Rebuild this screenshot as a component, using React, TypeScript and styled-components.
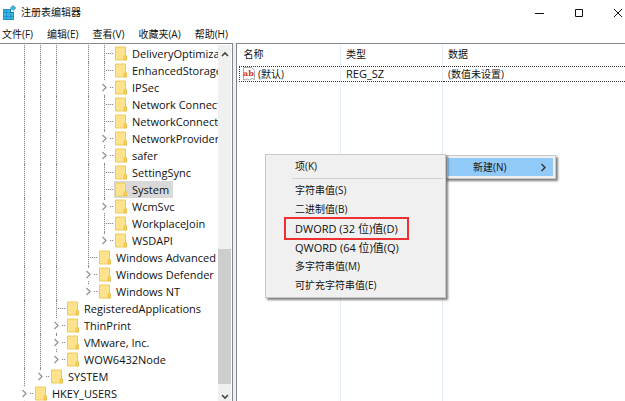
import React from "react";
import styled, { createGlobalStyle } from "styled-components";

const Global = createGlobalStyle`
  * { box-sizing: border-box; }
  html, body, #root { height: 100%; }
  body { margin: 0; overflow: hidden; background: #fff; }
  body, button { font-family: "Open Sans", "Noto Sans CJK SC", sans-serif; font-size: 10px; line-height: 17px; color: #111; }
`;

const Window = styled.div`
  height: 100vh;
  display: flex;
  flex-direction: column;
  background: #fff;
  overflow: hidden;
`;

const TitleBar = styled.header`
  display: flex;
  align-items: center;
  height: 25px;
  padding-left: 2px;
  margin-right: -12px;
  flex: none;
`;

const Title = styled.h1`
  margin: 0 auto 0 5px;
  font-size: 10px;
  font-weight: 400;
`;

const CaptionButton = styled.button`
  display: flex;
  justify-content: center;
  align-items: center;
  width: 39px;
  height: 24px;
  padding: 0;
  border: 0;
  background: none;
`;

const MenuBar = styled.nav`
  display: flex;
  gap: 14px;
  height: 18px;
  padding-left: 2px;
  flex: none;
`;

const MenuBarItem = styled.button`
  padding: 0;
  border: 0;
  background: none;
  white-space: nowrap;
`;

const Panels = styled.main`
  flex: 1;
  min-height: 0;
  display: grid;
  grid-template-columns: minmax(120px, 233px) 1fr;
  column-gap: 3px;
  background: #f0f0f0;
`;

const TreePanel = styled.section`
  display: grid;
  grid-template-columns: 1fr 13px;
  min-height: 0;
  padding: 1px 1px 0 0;
  background: #fff;
  border-top: 1px solid #828790;
  border-right: 1px solid #828790;
  overflow: hidden;
`;

const Tree = styled.ul`
  margin: 0;
  padding: 0 0 0 16px;
  list-style: none;
  overflow: hidden;
`;

const TreeRow = styled.li`
  display: flex;
  height: 17px;
  white-space: nowrap;
  &:nth-child(even) { --phase: 1px; }
`;

type Span = "full" | "above" | "none";
const Guide = styled.span<{ $span: Span }>`
  position: relative;
  flex: none;
  width: 16px;
  height: 17px;
  display: flex;
  justify-content: center;
  align-items: center;
  &::before {
    content: "";
    position: absolute;
    inset: 0 auto ${(p) => (p.$span === "above" ? "8px" : "0")} 8px;
    width: 1px;
    display: ${(p) => (p.$span === "none" ? "none" : "block")};
    background: repeating-linear-gradient(#8c8c8c 0 1px, #e4e4e4 1px 2px) 0 var(--phase, 0);
  }
  svg { position: relative; background: #fff; }
`;

const Stub = styled.span<{ $long: boolean }>`
  flex: none;
  align-self: center;
  width: ${(p) => (p.$long ? 10 : 4)}px;
  height: 1px;
  margin-left: ${(p) => (p.$long ? -8 : -2)}px;
  background: repeating-linear-gradient(90deg, #8c8c8c 0 1px, #e4e4e4 1px 2px);
`;

const TreeLabel = styled.button<{ $selected: boolean }>`
  display: flex;
  align-items: center;
  gap: 5px;
  height: 17px;
  padding: 0 4px 0 1px;
  border: 0;
  font-size: 11px;
  white-space: nowrap;
  background: ${(p) => (p.$selected ? "#d9d9d9" : "none")};
`;

const Scrollbar = styled.div`
  display: flex;
  flex-direction: column;
  background: #f0f0f0;
`;

const ScrollButton = styled.button<{ $bottom?: boolean }>`
  height: 17px;
  flex: none;
  padding: 0;
  padding-top: ${(p) => (p.$bottom ? 8 : 0)}px;
  border: 0;
  background: none;
  display: flex;
  align-items: center;
  justify-content: center;
`;

const ScrollTrack = styled.div`
  flex: 1;
  display: flex;
  flex-direction: column;
  justify-content: flex-end;
`;

const ScrollThumb = styled.div`
  height: 42%;
  background: #cdcdcd;
`;

const ListPanel = styled.section`
  position: relative;
  min-width: 0;
  padding-left: 2px;
  background: #fff;
  border-top: 1px solid #828790;
  border-left: 1px solid #828790;
`;

const ValueTable = styled.table`
  width: 100%;
  height: 100%;
  table-layout: fixed;
  border-collapse: collapse;
  th, td { padding: 0 0 0 4px; text-align: left; font-weight: 400; white-space: nowrap; }
  th + th, td + td { border-left: 1px solid #e3effb; padding-left: 5px; }
`;

const HeadRow = styled.tr`
  height: 22px;
`;

const ValueRow = styled.tr`
  height: 15px;
  td {
    line-height: 14px;
    border-top: 1px dotted #333;
    border-bottom: 1px dotted #333;
  }
  td:first-child { padding-left: 2px; border-left: 1px dotted #333; }
`;

const TypeText = styled.span`
  font-size: 11px;
`;

const Name = styled.span`
  display: flex;
  align-items: center;
  gap: 2px;
`;

const Popup = styled.div`
  position: absolute;
  background: #f0f0f0;
  border: 1px solid #c8c8c8;
  box-shadow: 2px 2px 2px rgba(0, 0, 0, 0.5);
`;

const ParentMenu = styled(Popup)`
  left: 208px;
  top: 111px;
  width: 111px;
  padding: 2px;
`;

const ParentItem = styled.button`
  display: flex;
  align-items: center;
  justify-content: space-between;
  width: 100%;
  height: 18px;
  padding: 0 6px 0 25px;
  border: 0;
  background: #91c9f7;
`;

const SubMenu = styled(Popup)`
  left: 28px;
  top: 110px;
  width: 181px;
  padding: 2px;
`;

const SubItem = styled.button<{ $marked?: boolean; $latin?: boolean }>`
  display: block;
  width: 100%;
  height: 19px;
  padding: 0 0 0 27px;
  border: 0;
  background: none;
  font-size: ${(p) => (p.$latin ? 11 : 10)}px;
  text-align: left;
  white-space: nowrap;
  position: relative;
  &::after {
    content: "";
    display: ${(p) => (p.$marked ? "block" : "none")};
    position: absolute;
    inset: -2px 34px -2px 16px;
    border: 2px solid #ee3033;
  }
`;

const Separator = styled.hr`
  margin: 2px 0 2px 24px;
  border: 0;
  border-top: 1px solid #d0d0d0;
`;

const Chevron = ({ color = "#999" }: { color?: string }) => (
  <svg width="8" height="13" viewBox="0 0 8 13" fill="none" stroke={color} strokeWidth="1.4">
    <path d="M2.5 3 6 6.5 2.5 10" />
  </svg>
);

const Folder = () => (
  <svg width="12" height="15" viewBox="0 0 12 15">
    <path d="M.5 1h10v8.5l1 .5v4H.5z" fill="#ffe38c" stroke="#edca5c" strokeWidth="1" />
    <path d="M9 14v-4l1.5-1 1 1v4z" fill="#f5d066" stroke="#e5b93f" strokeWidth=".6" />
  </svg>
);

const AppIcon = () => (
  <svg width="14" height="16" viewBox="0 0 14 16">
    <path d="M1 4h8v3h3v8H1z" fill="#127fb3" />
    <path d="M1.500 4.500h3v3h-3zM5 4.500h3v3H5zM1.500 8h3v3h-3zM5 8h3v3H5zM8.500 8h3v3h-3zM1.500 11.500h3v3h-3zM5 11.500h3v3H5zM8.500 11.500h3v3h-3z" fill="#38b4e4" />
    <path d="m11 .5 2.700 2.500L11 5.500 8.500 3z" fill="#45b5dd" stroke="#1b8abb" strokeWidth=".8" />
  </svg>
);

const StringIcon = () => (
  <svg width="14" height="14" viewBox="0 0 14 14">
    <path d="M1.500.5h8l3 3v9l-2.500-1-2.500 1.500L5 12l-3.500 1z" fill="#fff" stroke="#aaa" />
    <text x="1" y="9" fontFamily="DejaVu Serif, serif" fontSize="8" fontWeight="700" fill="#d4391c">ab</text>
  </svg>
);

type Node = [label: string, level: number, expandable?: boolean, last?: boolean];
const nodes: Node[] = [
  ["DeliveryOptimization", 5],
  ["EnhancedStorageDevices", 5],
  ["IPSec", 5, true],
  ["Network Connections", 5],
  ["NetworkConnectivity", 5],
  ["NetworkProvider", 5, true],
  ["safer", 5, true],
  ["SettingSync", 5],
  ["System", 5],
  ["WcmSvc", 5, true],
  ["WorkplaceJoin", 5],
  ["WSDAPI", 5, true, true],
  ["Windows Advanced Threat", 4],
  ["Windows Defender", 4, true],
  ["Windows NT", 4, true, true],
  ["RegisteredApplications", 2],
  ["ThinPrint", 2, true],
  ["VMware, Inc.", 2, true],
  ["WOW6432Node", 2, true, true],
  ["SYSTEM", 1, true, true],
  ["HKEY_USERS", 0, true],
];

const hasGuide = (row: number, depth: number) =>
  nodes.slice(row).some(([, level]) => level === depth);

const TreeItem = ({ row }: { row: number }) => {
  const [label, level, expandable, last] = nodes[row];
  return (
    <TreeRow>
      {Array.from({ length: level }, (_, i) => (
        <Guide key={i} $span={hasGuide(row, i) ? "full" : "none"} />
      ))}
      <Guide $span={last ? "above" : "full"}>{expandable && <Chevron />}</Guide>
      <Stub $long={!expandable} />
      <TreeLabel $selected={label === "System"}>
        <Folder />
        {label}
      </TreeLabel>
    </TreeRow>
  );
};

export default function App() {
  return (
    <Window>
      <Global />
      <TitleBar>
        <AppIcon />
        <Title>注册表编辑器</Title>
        <CaptionButton aria-label="最小化">
          <svg width="10" height="10"><path d="M0 5.500h9" stroke="#111" /></svg>
        </CaptionButton>
        <CaptionButton aria-label="最大化">
          <svg width="10" height="10"><path d="M1.500 1.500h7v7h-7z" fill="none" stroke="#111" /></svg>
        </CaptionButton>
        <CaptionButton aria-label="关闭">
          <svg width="10" height="10"><path d="m1 1 8 8M9 1 1 9" stroke="#111" /></svg>
        </CaptionButton>
      </TitleBar>
      <MenuBar>
        {["文件(F)", "编辑(E)", "查看(V)", "收藏夹(A)", "帮助(H)"].map((m) => (
          <MenuBarItem key={m}>{m}</MenuBarItem>
        ))}
      </MenuBar>
      <Panels>
        <TreePanel>
          <Tree>
            {nodes.map((n, row) => <TreeItem key={n[0]} row={row} />)}
          </Tree>
          <Scrollbar>
            <ScrollButton aria-label="向上滚动">
              <svg width="8" height="6" fill="none" stroke="#444" strokeWidth="1.600"><path d="m1 5 3-3 3 3" /></svg>
            </ScrollButton>
            <ScrollTrack><ScrollThumb /></ScrollTrack>
            <ScrollButton $bottom aria-label="向下滚动">
              <svg width="8" height="6" fill="none" stroke="#444" strokeWidth="1.600"><path d="m1 1 3 3 3-3" /></svg>
            </ScrollButton>
          </Scrollbar>
        </TreePanel>
        <ListPanel>
          <ValueTable>
            <colgroup>
              <col width="101" />
              <col width="102" />
              <col />
            </colgroup>
            <thead>
              <HeadRow><th>名称</th><th>类型</th><th>数据</th></HeadRow>
            </thead>
            <tbody>
              <ValueRow>
                <td><Name><StringIcon />(默认)</Name></td>
                <td><TypeText>REG_SZ</TypeText></td>
                <td>(数值未设置)</td>
              </ValueRow>
              <tr><td /><td /><td /></tr>
            </tbody>
          </ValueTable>
          <ParentMenu>
            <ParentItem>新建(N)<Chevron color="#333" /></ParentItem>
          </ParentMenu>
          <SubMenu>
            <SubItem>项(K)</SubItem>
            <Separator />
            <SubItem>字符串值(S)</SubItem>
            <SubItem>二进制值(B)</SubItem>
            <SubItem $marked $latin>DWORD (32 位)值(D)</SubItem>
            <SubItem $latin>QWORD (64 位)值(Q)</SubItem>
            <SubItem>多字符串值(M)</SubItem>
            <SubItem>可扩充字符串值(E)</SubItem>
          </SubMenu>
        </ListPanel>
      </Panels>
    </Window>
  );
}
